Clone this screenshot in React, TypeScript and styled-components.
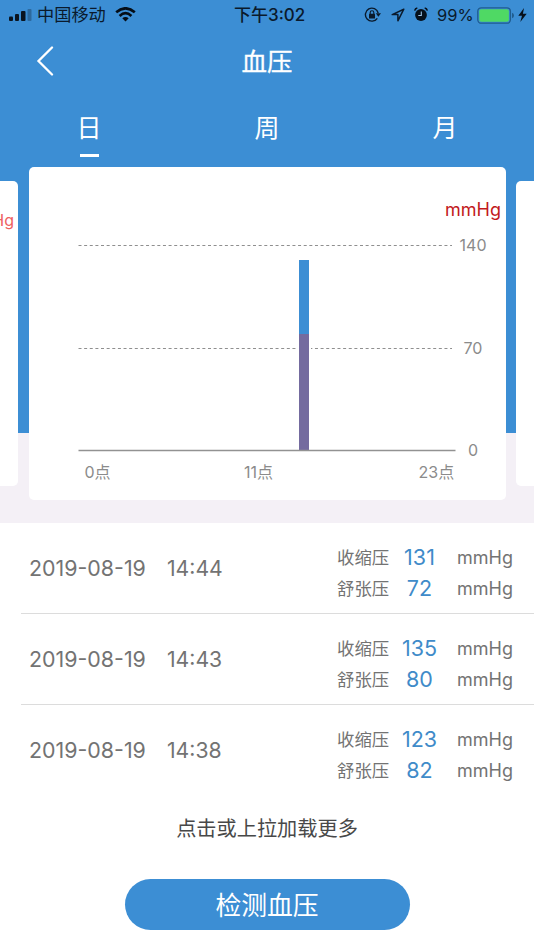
import React from "react";
import styled, { createGlobalStyle } from "styled-components";

const BLUE = "#3c8ed4";

const GlobalStyle = createGlobalStyle`
  * { box-sizing: border-box; }
  html, body { margin: 0; padding: 0; background: #fff; }
  body { font-family: Inter, "Noto Sans CJK SC", sans-serif; overflow: hidden; }
  button { font: inherit; border: 0; padding: 0; background: none; color: inherit; }
`;

const Page = styled.main`
  width: 534px;
  height: 950px;
  display: flex;
  flex-direction: column;
  overflow: hidden;
  background: #fff;
`;

const Hero = styled.section`
  height: 523px;
  flex: none;
  display: flex;
  flex-direction: column;
  background: linear-gradient(${BLUE} 433px, #f4f0f6 433px);
`;

const StatusBar = styled.div`
  height: 30px;
  display: grid;
  grid-template-columns: 1fr 74px 1fr;
  align-items: center;
  color: #0a1a2c;
  font-size: 17px;
  line-height: 30px;
`;

const StatusLeft = styled.div`
  display: flex;
  align-items: center;
  padding-left: 8px;
`;

const Carrier = styled.span`
  margin: 0 8px 0 4px;
  width: 70px;
  font-size: 17.2px;
  white-space: nowrap;
`;

const Clock = styled.time`
  padding-left: 4px;
  font-weight: 500;
  white-space: nowrap;
  text-align: center;
`;

const StatusRight = styled.div`
  display: flex;
  align-items: center;
  justify-content: flex-end;
  padding-right: 7px;
`;

const StatusIcons = styled.div`
  display: flex;
  align-items: center;
  gap: 9px;
`;

const BatteryText = styled.span`
  width: 37px;
  margin: 0 3px 0 9px;
  font-size: 16.5px;
  white-space: nowrap;
`;

const NavBar = styled.header`
  height: 60px;
  display: grid;
  grid-template-columns: 90px 1fr 90px;
  align-items: center;
`;

const BackButton = styled.button`
  display: flex;
  justify-content: center;
`;

const Title = styled.h1`
  margin: 0;
  padding-top: 2px;
  color: #fff;
  font-size: 25.5px;
  font-weight: 400;
  -webkit-text-stroke: 0.3px #fff;
  line-height: 60px;
  text-align: center;
`;

const Tabs = styled.nav`
  height: 77px;
  display: grid;
  grid-template-columns: repeat(3, 178px);
`;

const Tab = styled.button<{ $active?: boolean }>`
  display: flex;
  flex-direction: column;
  align-items: center;
  color: #fff;
  font-size: 25px;
  line-height: 36px;
  padding-top: 20px;

  &::after {
    content: "";
    width: 19px;
    height: 3px;
    margin-top: 8px;
    background: ${(p) => (p.$active ? "#fff" : "transparent")};
  }
`;

const Carousel = styled.div`
  height: 333px;
  display: grid;
  grid-template-columns: 18px 477px 18px;
  column-gap: 10.5px;
  align-items: center;
`;

const SideCard = styled.div<{ $side: "left" | "right" }>`
  height: 305px;
  display: flex;
  justify-content: flex-end;
  overflow: hidden;
  padding: 28px 4px 0 0;
  background: #fff;
  border-radius: ${(p) => (p.$side === "left" ? "0 5px 5px 0" : "5px 0 0 5px")};
  color: #ee5f60;
  font-size: 16px;
  line-height: 22px;
`;

const ChartCard = styled.div`
  height: 333px;
  background: #fff;
  border-radius: 5px;
  overflow: hidden;
`;

const ChartSvg = styled.svg`
  display: block;
`;

const AxisText = styled.text`
  fill: #8b8b8b;
  font-size: 16px;
`;

const UnitText = styled.text`
  fill: #c2191c;
  font-size: 18px;
`;

const Records = styled.ul`
  list-style: none;
  margin: 0;
  padding: 0 0 0 21px;
`;

const Record = styled.li`
  height: 91px;
  display: flex;
  align-items: center;
  padding-left: 8px;
  color: #737373;
  border-bottom: 1px solid #dcdcdc;

  &:last-child { border-bottom-color: transparent; }
`;

const DateText = styled.span`
  width: 138px;
  font-size: 21.4px;
  white-space: nowrap;
`;

const TimeText = styled.span`
  width: 170px;
  font-size: 21.2px;
  white-space: nowrap;
`;

const Measures = styled.div`
  display: flex;
  flex-direction: column;
  padding-top: 9px;
`;

const Measure = styled.div`
  height: 31px;
  display: grid;
  grid-template-columns: 53px 59px auto;
  align-items: center;
  line-height: 31px;
`;

const MeasureName = styled.span`
  font-size: 17.4px;
`;

const MeasureValue = styled.strong`
  color: #3f8bc9;
  font-size: 21.5px;
  font-weight: 400;
  text-align: center;
`;

const MeasureUnit = styled.span`
  padding-left: 8px;
  font-size: 18px;
`;

const LoadMore = styled.button`
  height: 36px;
  margin-top: 15px;
  color: #484848;
  font-size: 20.2px;
  line-height: 36px;
`;

const MeasureButton = styled.button`
  width: 285px;
  height: 51px;
  flex: none;
  align-self: center;
  margin-top: 32px;
  border-radius: 26px;
  background: ${BLUE};
  color: #fff;
  font-size: 25.8px;
  line-height: 53px;
`;

const records = [
  { time: "14:44", systolic: 131, diastolic: 72 },
  { time: "14:43", systolic: 135, diastolic: 80 },
  { time: "14:38", systolic: 123, diastolic: 82 },
];

const SignalIcon = () => (
  <svg width="25" height="14" viewBox="0 0 25 14" fill="#0a1420">
    <rect x="1" y="8.500" width="4" height="4.500" rx="1" />
    <rect x="7" y="6" width="4" height="7" rx="1" />
    <rect x="13" y="3" width="4.500" height="10" rx="1" />
    <rect x="19.500" y="1" width="4" height="12" rx="1" opacity=".3" />
  </svg>
);

const WifiIcon = () => (
  <svg width="21" height="16" viewBox="0 0 21 16" fill="none" stroke="#050d16" strokeWidth="2.7">
    <path d="M1.2 5.300Q10.500-2.600 19.800 5.300" />
    <path d="M4.600 8.900Q10.500 3.500 16.400 8.900" />
    <path d="M7.300 11.200L10.500 14.400L13.700 11.200Q10.500 8.700 7.300 11.200Z" fill="#050d16" stroke="none" />
  </svg>
);

const RotationLockIcon = () => (
  <svg width="18" height="16" viewBox="0 0 18 16" fill="none" stroke="#0a1a2c" strokeWidth="1.4">
    <path d="M13.300 11.300A6.500 6.500 0 1 1 14.200 6" />
    <path d="M11.800 6.300H17L14.400 9.700Z" fill="#0a1a2c" stroke="none" />
    <rect x="5" y="6.800" width="6" height="4.600" rx=".5" fill="#0a1a2c" stroke="none" />
    <path d="M6.200 7V5.500a1.800 1.800 0 0 1 3.600 0V7" strokeWidth="1.100" />
  </svg>
);

const LocationIcon = () => (
  <svg width="14" height="14" viewBox="0 0 14 14" fill="none" stroke="#0a1a2c" strokeWidth="1.500" strokeLinejoin="round">
    <path d="M12.800 1.200L1.200 6.600H6.900V12.800Z" />
  </svg>
);

const AlarmIcon = () => (
  <svg width="14" height="16" viewBox="0 0 14 16">
    <circle cx="7" cy="8" r="5.900" fill="#06101b" />
    <path d="M.7 3.600Q1 1.500 3.300 1M13.300 3.600Q13 1.500 10.700 1" fill="none" stroke="#06101b" strokeWidth="1.500" />
    <path d="M7.300 4.500V8.500H4.300" fill="none" stroke="#9cc3e6" strokeWidth="1.100" />
  </svg>
);

const BatteryIcon = () => (
  <svg width="37" height="17" viewBox="0 0 37 17">
    <rect x=".8" y=".8" width="32.600" height="15.400" rx="3.500" fill="none" stroke="#1f5c8f" strokeWidth="1.300" />
    <rect x="2.300" y="2.300" width="29.600" height="12.400" rx="2" fill="#4fd964" />
    <path d="M35 5.800Q37 6.300 37 8.500T35 11.200Z" fill="#1f5c8f" />
  </svg>
);

const BoltIcon = () => (
  <svg width="13" height="14" viewBox="-4 0 13 14">
    <path d="M6 0L.3 7.700H4L2.300 14L8.700 5.800H4.900Z" fill="#06101b" />
  </svg>
);

const PressureChart = () => (
  <ChartSvg width="477" height="333" viewBox="29 167 477 333">
    <g stroke="#8f8f8f" strokeWidth="1.200" strokeDasharray="3 2.630">
      <path d="M78.500 245.500H452" />
      <path d="M78.500 348.500H452" />
    </g>
    <rect x="297" y="259" width="14" height="191" fill="#fff" />
    <rect x="299" y="260" width="10" height="74" fill={BLUE} />
    <rect x="299" y="334" width="10" height="116" fill="#746b9f" />
    <path d="M78.500 450.500H455.500" stroke="#929292" strokeWidth="1.300" />
    <UnitText x="445" y="216">mmHg</UnitText>
    <AxisText x="473" y="251" textAnchor="middle">140</AxisText>
    <AxisText x="473" y="354" textAnchor="middle">70</AxisText>
    <AxisText x="473" y="456" textAnchor="middle">0</AxisText>
    <AxisText x="84.500" y="478">0点</AxisText>
    <AxisText x="244" y="478">11点</AxisText>
    <AxisText x="418.500" y="478">23点</AxisText>
  </ChartSvg>
);

export default function App() {
  return (
    <>
      <GlobalStyle />
      <Page>
        <Hero>
          <StatusBar>
            <StatusLeft>
              <SignalIcon />
              <Carrier>中国移动</Carrier>
              <WifiIcon />
            </StatusLeft>
            <Clock>下午3:02</Clock>
            <StatusRight>
              <StatusIcons>
                <RotationLockIcon />
                <LocationIcon />
                <AlarmIcon />
              </StatusIcons>
              <BatteryText>99%</BatteryText>
              <BatteryIcon />
              <BoltIcon />
            </StatusRight>
          </StatusBar>
          <NavBar>
            <BackButton aria-label="返回">
              <svg width="18" height="30" viewBox="0 0 18 30" fill="none" stroke="#fff" strokeWidth="2.300" strokeLinecap="round">
                <path d="M16 1.500L2.500 15L16 28.500" />
              </svg>
            </BackButton>
            <Title>血压</Title>
          </NavBar>
          <Tabs>
            <Tab $active>日</Tab>
            <Tab>周</Tab>
            <Tab>月</Tab>
          </Tabs>
          <Carousel>
            <SideCard $side="left">mmHg</SideCard>
            <ChartCard><PressureChart /></ChartCard>
            <SideCard $side="right" />
          </Carousel>
        </Hero>
        <Records>
          {records.map((r) => (
            <Record key={r.time}>
              <DateText>2019-08-19</DateText>
              <TimeText>{r.time}</TimeText>
              <Measures>
                <Measure>
                  <MeasureName>收缩压</MeasureName>
                  <MeasureValue>{r.systolic}</MeasureValue>
                  <MeasureUnit>mmHg</MeasureUnit>
                </Measure>
                <Measure>
                  <MeasureName>舒张压</MeasureName>
                  <MeasureValue>{r.diastolic}</MeasureValue>
                  <MeasureUnit>mmHg</MeasureUnit>
                </Measure>
              </Measures>
            </Record>
          ))}
        </Records>
        <LoadMore>点击或上拉加载更多</LoadMore>
        <MeasureButton>检测血压</MeasureButton>
      </Page>
    </>
  );
}
